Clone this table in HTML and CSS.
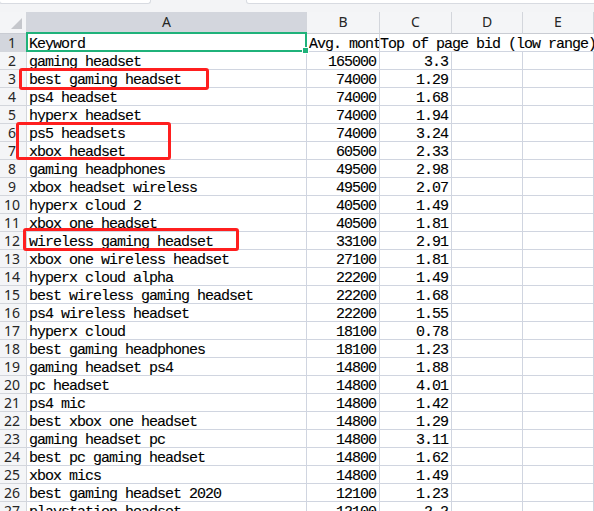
FILE: index.html
```html
<!DOCTYPE html>
<html>
<head>
<meta charset="utf-8">
<link rel="stylesheet" href="styles.css">
</head>
<body>
<div class="sheet">
  <div class="topbar">
    <div class="box box-name"></div>
    <div class="box box-formula"></div>
  </div>
  <div class="row hdr">
    <div class="corner"><span class="tri"></span></div>
    <div class="ch sel">A</div>
    <div class="ch">B</div>
    <div class="ch">C</div>
    <div class="ch">D</div>
    <div class="ch">E</div>
  </div>
  <div class="row"><div class="rh sel">1</div><div class="c">Keyword</div><div class="c">Avg. monthly searches</div><div class="c span3">Top of page bid (low range)</div></div>
  <div class="row"><div class="rh">2</div><div class="c">gaming headset</div><div class="c n">165000</div><div class="c n">3.3</div><div class="c"></div><div class="c"></div></div>
  <div class="row"><div class="rh">3</div><div class="c">best gaming headset</div><div class="c n">74000</div><div class="c n">1.29</div><div class="c"></div><div class="c"></div></div>
  <div class="row"><div class="rh">4</div><div class="c">ps4 headset</div><div class="c n">74000</div><div class="c n">1.68</div><div class="c"></div><div class="c"></div></div>
  <div class="row"><div class="rh">5</div><div class="c">hyperx headset</div><div class="c n">74000</div><div class="c n">1.94</div><div class="c"></div><div class="c"></div></div>
  <div class="row"><div class="rh">6</div><div class="c">ps5 headsets</div><div class="c n">74000</div><div class="c n">3.24</div><div class="c"></div><div class="c"></div></div>
  <div class="row"><div class="rh">7</div><div class="c">xbox headset</div><div class="c n">60500</div><div class="c n">2.33</div><div class="c"></div><div class="c"></div></div>
  <div class="row"><div class="rh">8</div><div class="c">gaming headphones</div><div class="c n">49500</div><div class="c n">2.98</div><div class="c"></div><div class="c"></div></div>
  <div class="row"><div class="rh">9</div><div class="c">xbox headset wireless</div><div class="c n">49500</div><div class="c n">2.07</div><div class="c"></div><div class="c"></div></div>
  <div class="row"><div class="rh">10</div><div class="c">hyperx cloud 2</div><div class="c n">40500</div><div class="c n">1.49</div><div class="c"></div><div class="c"></div></div>
  <div class="row"><div class="rh">11</div><div class="c">xbox one headset</div><div class="c n">40500</div><div class="c n">1.81</div><div class="c"></div><div class="c"></div></div>
  <div class="row"><div class="rh">12</div><div class="c">wireless gaming headset</div><div class="c n">33100</div><div class="c n">2.91</div><div class="c"></div><div class="c"></div></div>
  <div class="row"><div class="rh">13</div><div class="c">xbox one wireless headset</div><div class="c n">27100</div><div class="c n">1.81</div><div class="c"></div><div class="c"></div></div>
  <div class="row"><div class="rh">14</div><div class="c">hyperx cloud alpha</div><div class="c n">22200</div><div class="c n">1.49</div><div class="c"></div><div class="c"></div></div>
  <div class="row"><div class="rh">15</div><div class="c">best wireless gaming headset</div><div class="c n">22200</div><div class="c n">1.68</div><div class="c"></div><div class="c"></div></div>
  <div class="row"><div class="rh">16</div><div class="c">ps4 wireless headset</div><div class="c n">22200</div><div class="c n">1.55</div><div class="c"></div><div class="c"></div></div>
  <div class="row"><div class="rh">17</div><div class="c">hyperx cloud</div><div class="c n">18100</div><div class="c n">0.78</div><div class="c"></div><div class="c"></div></div>
  <div class="row"><div class="rh">18</div><div class="c">best gaming headphones</div><div class="c n">18100</div><div class="c n">1.23</div><div class="c"></div><div class="c"></div></div>
  <div class="row"><div class="rh">19</div><div class="c">gaming headset ps4</div><div class="c n">14800</div><div class="c n">1.88</div><div class="c"></div><div class="c"></div></div>
  <div class="row"><div class="rh">20</div><div class="c">pc headset</div><div class="c n">14800</div><div class="c n">4.01</div><div class="c"></div><div class="c"></div></div>
  <div class="row"><div class="rh">21</div><div class="c">ps4 mic</div><div class="c n">14800</div><div class="c n">1.42</div><div class="c"></div><div class="c"></div></div>
  <div class="row"><div class="rh">22</div><div class="c">best xbox one headset</div><div class="c n">14800</div><div class="c n">1.29</div><div class="c"></div><div class="c"></div></div>
  <div class="row"><div class="rh">23</div><div class="c">gaming headset pc</div><div class="c n">14800</div><div class="c n">3.11</div><div class="c"></div><div class="c"></div></div>
  <div class="row"><div class="rh">24</div><div class="c">best pc gaming headset</div><div class="c n">14800</div><div class="c n">1.62</div><div class="c"></div><div class="c"></div></div>
  <div class="row"><div class="rh">25</div><div class="c">xbox mics</div><div class="c n">14800</div><div class="c n">1.49</div><div class="c"></div><div class="c"></div></div>
  <div class="row"><div class="rh">26</div><div class="c">best gaming headset 2020</div><div class="c n">12100</div><div class="c n">1.23</div><div class="c"></div><div class="c"></div></div>
  <div class="row"><div class="rh">27</div><div class="c">playstation headset</div><div class="c n">12100</div><div class="c n">2.2</div><div class="c"></div><div class="c"></div></div>

  <div class="selection"><span class="handle"></span></div>
  <div class="mark mark-1"></div>
  <div class="mark mark-2"></div>
  <div class="mark mark-3"></div>
</div>
</body>
</html>
```
FILE: styles.css
```css
html, body {
  margin: 0;
  padding: 0;
}
body {
  width: 594px;
  height: 511px;
  overflow: hidden;
  background: #f3f4f6;
}
.sheet {
  position: relative;
  width: 594px;
  height: 511px;
  overflow: hidden;
}
.topbar {
  height: 12px;
  display: flex;
  align-items: flex-start;
}
.box {
  height: 3px;
  background: #fff;
  border: 1px solid #d8dbe1;
  border-top: none;
  border-radius: 0 0 3px 3px;
}
.box-name {
  width: 150px;
  margin-left: -1px;
}
.box-formula {
  flex: 1;
  margin-left: 95px;
  margin-right: -2px;
}
.row {
  display: grid;
  grid-template-columns: 27px 280px 73px 72px 71px 1fr;
  height: 18px;
}
.row.hdr {
  height: 22px;
}
.corner {
  position: relative;
  background: #f4f5f7;
  border-right: 1px solid #d3d6dc;
  border-bottom: 1px solid #c9ccd3;
}
.tri {
  position: absolute;
  right: 4px;
  bottom: 4px;
  width: 0;
  height: 0;
  border-left: 11px solid transparent;
  border-bottom: 11px solid #c5c7cc;
}
.ch {
  background: #f4f5f7;
  border-right: 1px solid #d3d6dc;
  border-bottom: 1px solid #c9ccd3;
  font-family: "Noto Sans", "Liberation Sans", sans-serif;
  font-size: 14px;
  line-height: 20px;
  text-align: center;
  color: #262626;
}
.ch.sel, .rh.sel {
  background: #d3d6dd;
}
.rh {
  background: #f4f5f7;
  border-right: 1px solid #d3d6dc;
  border-bottom: 1px solid #d3d6dc;
  font-family: "Noto Sans", "Liberation Sans", sans-serif;
  font-size: 14px;
  line-height: 17px;
  text-align: center;
  padding-right: 2px;
  color: #262626;
  box-sizing: border-box;
}
.c {
  box-sizing: border-box;
  height: 18px;
  background: #fff;
  border-right: 1px solid #d0d5e0;
  border-bottom: 1px solid #d0d5e0;
  padding: 2px 2px 0 2px;
  font-family: "Liberation Mono", "Courier New", monospace;
  font-size: 15px;
  line-height: 17px;
  letter-spacing: -1px;
  -webkit-text-stroke: 0.12px #000;
  white-space: nowrap;
  overflow-x: clip;
  overflow-y: visible;
  color: #000;
}
.c.n {
  text-align: right;
  padding-right: 3px;
}
.c.span3 {
  grid-column: span 3;
  border-right: none;
  padding-left: 0;
}
.selection {
  position: absolute;
  left: 26px;
  top: 32px;
  width: 281px;
  height: 20px;
  box-sizing: border-box;
  border: 2px solid #1fb27a;
}
.handle {
  position: absolute;
  right: -4px;
  bottom: -4px;
  width: 5px;
  height: 5px;
  background: #1fb27a;
  border: 1px solid #fff;
}
.mark {
  position: absolute;
  box-sizing: border-box;
  border: 3px solid #ff1f1f;
  border-radius: 3px;
}
.mark-1 {
  left: 19px;
  top: 68px;
  width: 190px;
  height: 22px;
}
.mark-2 {
  left: 16px;
  top: 122px;
  width: 155px;
  height: 38px;
}
.mark-3 {
  left: 23px;
  top: 228px;
  width: 216px;
  height: 23px;
}
```
